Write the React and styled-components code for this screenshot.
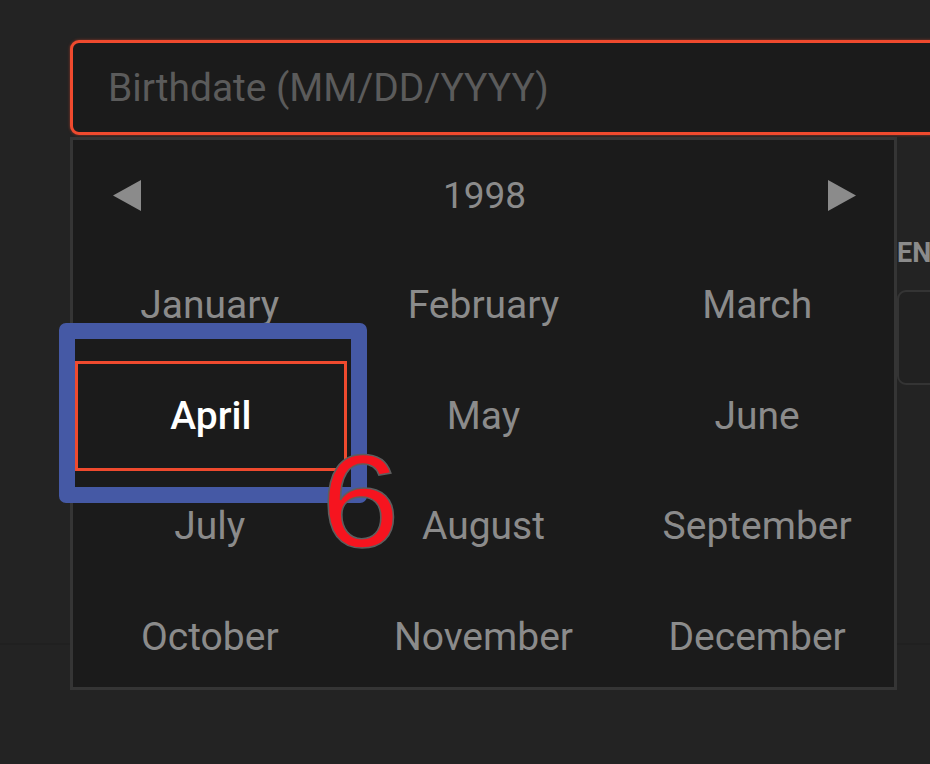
import React from 'react'
import styled, { createGlobalStyle } from 'styled-components'

const GlobalStyle = createGlobalStyle`
    html, body {
        margin: 0;
        padding: 0;
        background: #232323;
        overflow: hidden;
    }
    body {
        font-family: Roboto, "Liberation Sans", sans-serif;
    }
`

const accent = '#ef4a2e'
const muted = '#8b8b8b'

const MONTHS = [
    'January', 'February', 'March',
    'April', 'May', 'June',
    'July', 'August', 'September',
    'October', 'November', 'December',
]

const Page = styled.div`
    position: relative;
    width: 930px;
    height: 764px;
    background: #232323;
    overflow: hidden;
`

const Top = styled.section`
    height: 645px;
    box-sizing: border-box;
    padding: 40px 0 0 70px;
    border-bottom: 2px solid #202020;
`

const Field = styled.div`
    position: relative;
`

const Input = styled.div`
    width: 1000px;
    height: 95px;
    box-sizing: border-box;
    display: flex;
    align-items: center;
    padding-left: 35px;
    background: #1b1b1b;
    border: 3px solid ${accent};
    border-radius: 9px;
    box-shadow: 0 0 3px rgba(239, 74, 46, 0.55);
    color: #5b5b5b;
    font-size: 38.9px;
`

const FormRow = styled.div`
    display: grid;
    grid-template-columns: 827px 1fr;
`

const Column = styled.div`
    padding-top: 103px;
`

const Label = styled.div`
    font-size: 27px;
    line-height: 30px;
    font-weight: 700;
    color: ${muted};
    white-space: nowrap;
`

const Box = styled.div`
    margin-top: 22px;
    width: 200px;
    height: 95px;
    box-sizing: border-box;
    border: 2px solid #343434;
    border-radius: 9px;
    background: #212121;
`

const Popup = styled.div`
    position: absolute;
    top: 97px;
    left: 0;
    width: 827px;
    height: 553px;
    box-sizing: border-box;
    background: #1b1b1b;
    border: 3px solid #353535;
    z-index: 2;
`

const Header = styled.div`
    height: 110px;
    display: flex;
    align-items: center;
    justify-content: space-between;
    padding: 0 38px 0 40px;
`

const Year = styled.div`
    font-size: 37px;
    color: ${muted};
`

const Arrow = styled.svg`
    width: 29px;
    height: 31px;
    fill: ${muted};
`

const Grid = styled.div`
    display: grid;
    grid-template-columns: repeat(3, 1fr);
    grid-auto-rows: 110.5px;
`

const Month = styled.div`
    display: flex;
    align-items: center;
    justify-content: center;
    box-sizing: border-box;
    font-size: 39px;
    color: ${p => (p.$selected ? '#ffffff' : muted)};
    font-weight: ${p => (p.$selected ? 500 : 400)};
    border: 3px solid ${p => (p.$selected ? accent : 'transparent')};
    margin-left: ${p => (p.$selected ? '2px' : '0')};
`

const Highlight = styled.div`
    position: absolute;
    left: 59px;
    top: 323px;
    width: 308px;
    height: 180px;
    box-sizing: border-box;
    border: 16px solid #4559a5;
    border-radius: 7px;
    z-index: 3;
`

const StepNumber = styled.div`
    position: absolute;
    left: 321px;
    top: 436px;
    font-family: "Liberation Sans", Arial, sans-serif;
    font-size: 131px;
    line-height: 1;
    color: #f6141f;
    -webkit-text-stroke: 1.5px #5e5e5e;
    transform: scaleX(1.08);
    transform-origin: left top;
    z-index: 4;
`

export default function App () {
    return (
        <Page>
            <GlobalStyle />
            <Top>
                <Field>
                    <Input>Birthdate (MM/DD/YYYY)</Input>
                    <FormRow>
                        <div />
                        <Column>
                            <Label>ENTER CODE</Label>
                            <Box />
                        </Column>
                    </FormRow>
                    <Popup>
                        <Header>
                            <Arrow viewBox="0 0 29 31"><path d="M0 15.5 L28 0 L28 31 Z" /></Arrow>
                            <Year>1998</Year>
                            <Arrow viewBox="0 0 29 31"><path d="M1 0 L29 15.5 L1 31 Z" /></Arrow>
                        </Header>
                        <Grid>
                            {MONTHS.map(m => (
                                <Month key={m} $selected={m === 'April'}>{m}</Month>
                            ))}
                        </Grid>
                    </Popup>
                </Field>
            </Top>
            <Highlight />
            <StepNumber>6</StepNumber>
        </Page>
    )
}
